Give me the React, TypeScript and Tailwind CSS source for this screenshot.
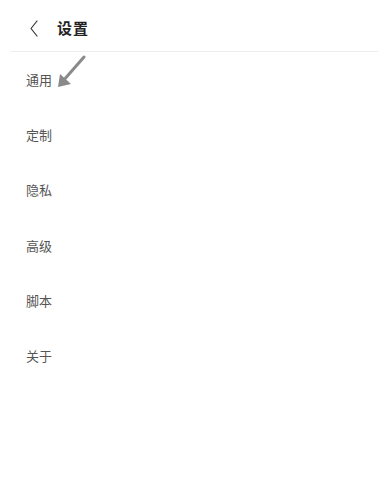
import React from 'react';

const items = ['通用', '定制', '隐私', '高级', '脚本', '关于'];

const App: React.FC = () => {
  return (
    <div
      className="relative w-[378px] h-[485px] bg-white overflow-hidden"
      style={{ fontFamily: '"Noto Sans CJK SC", "Noto Sans", sans-serif' }}
    >
      {/* Header */}
      <div className="h-[51px] flex items-center pt-[5px]">
        <div className="w-[57px] flex items-center pl-[29px]">
          <svg width="10" height="17" viewBox="0 0 10 17" fill="none" stroke="#333" strokeWidth="1.2" strokeLinecap="round" strokeLinejoin="round">
            <path d="M8 1 L2 8.5 L8 16" />
          </svg>
        </div>
        <h1 className="text-[15px] font-bold text-[#222] tracking-[1px]">设置</h1>
      </div>
      <div className="ml-[10px] h-px bg-[#eeeeee]" />

      {/* Menu */}
      <ul>
        {items.map((label) => (
          <li key={label} className="h-[55.3px] flex items-center pl-[26px] text-[13px] text-[#555]">
            {label}
          </li>
        ))}
      </ul>

      {/* Annotation arrow */}
      <svg className="absolute left-[54px] top-[54px]" width="36" height="38" viewBox="0 0 36 38" fill="none">
        <path d="M30 3 L9 27" stroke="#8a8a8a" strokeWidth="3" strokeLinecap="round" />
        <path d="M4 33 L6 20 L17 30 Z" fill="#8a8a8a" />
      </svg>
    </div>
  );
};

export default App;
